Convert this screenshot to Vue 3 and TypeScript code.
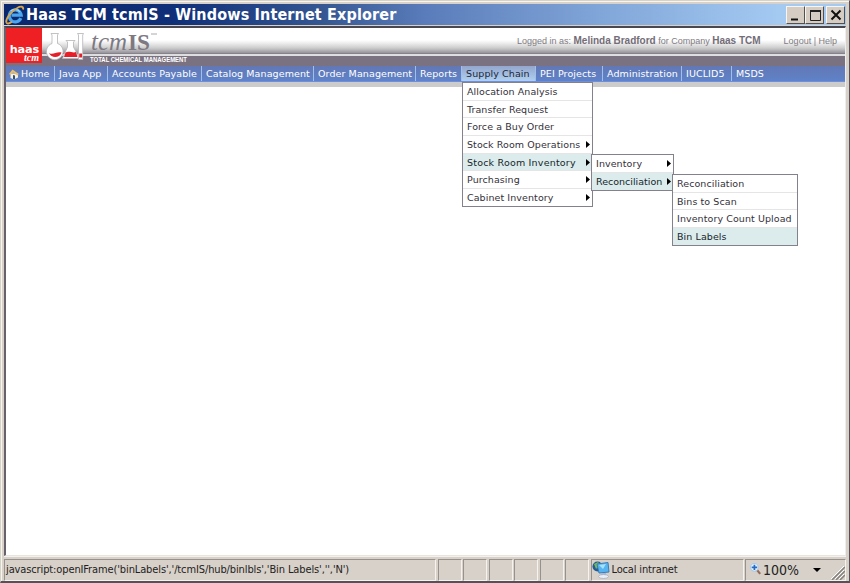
<script setup lang="ts">
interface MenuEntry {
  label: string
  children?: boolean
  active?: boolean
}

const navItems = ['Home', 'Java App', 'Accounts Payable', 'Catalog Management', 'Order Management', 'Reports', 'Supply Chain', 'PEI Projects', 'Administration', 'IUCLID5', 'MSDS']
const activeNav = 'Supply Chain'

const supplyMenu: MenuEntry[] = [
  { label: 'Allocation Analysis' },
  { label: 'Transfer Request' },
  { label: 'Force a Buy Order' },
  { label: 'Stock Room Operations', children: true },
  { label: 'Stock Room Inventory', children: true, active: true },
  { label: 'Purchasing', children: true },
  { label: 'Cabinet Inventory', children: true },
]
const inventoryMenu: MenuEntry[] = [
  { label: 'Inventory', children: true },
  { label: 'Reconciliation', children: true, active: true },
]
const reconciliationMenu: MenuEntry[] = [
  { label: 'Reconciliation' },
  { label: 'Bins to Scan' },
  { label: 'Inventory Count Upload' },
  { label: 'Bin Labels', active: true },
]
const menus = [
  { name: 'supply', entries: supplyMenu },
  { name: 'inventory', entries: inventoryMenu },
  { name: 'reconciliation', entries: reconciliationMenu },
]
</script>

<template>
  <div class="window">
    <header class="titlebar">
      <svg class="ie" width="20" height="20" viewBox="0 0 20 20">
        <path d="M15.800 13.200A6 6 0 1 1 16.200 10.200H6.500" fill="none" stroke="#49a5ee" stroke-width="3.200" />
        <path d="M5.500 6.200A6.200 6.200 0 0 1 15 7" fill="none" stroke="#9bd5ff" stroke-width="1.200" />
        <path d="M18 4.500C18.800 1.500 16 .700 12.200 3 6 6.500 .800 13.500 1.300 17.200 1.700 19.400 4.500 18.600 7 16.800" fill="none" stroke="#d9a54b" stroke-width="1.900" />
      </svg>
      <h1 class="title">Haas TCM tcmIS - Windows Internet Explorer</h1>
      <div class="controls">
        <button class="ctl" aria-label="Minimize"><svg width="16" height="16" viewBox="0 0 16 16"><path d="M3 12.500H10" stroke="#111" stroke-width="2" /></svg></button>
        <button class="ctl" aria-label="Maximize"><svg width="16" height="16" viewBox="0 0 16 16"><path d="M3.500 4V13.500H13.500V4" fill="none" stroke="#222" /><path d="M3 4H14" stroke="#222" stroke-width="2" /></svg></button>
        <button class="ctl close" aria-label="Close"><svg width="16" height="16" viewBox="0 0 16 16"><path d="M3.500 3.500L12.500 12.500M12.500 3.500L3.500 12.500" stroke="#111" stroke-width="2" /></svg></button>
      </div>
    </header>

    <main class="page">
      <div class="banner">
        <div class="haas"><b>haas</b><i>tcm</i></div>
        <svg class="brand" width="150" height="38" viewBox="42 28 150 38">
          <g fill="#fff" stroke="#b4b4b8" stroke-width=".8">
            <path d="M51 33.500H58.500L57.500 35V43.500A8.300 8.300 0 1 1 52 43.500V35Z" />
            <path d="M66 40.500H75L73.500 42V47L79.500 58.500H62.500L67.500 47V42Z" />
            <path d="M77.500 33.500H83.500L82.700 35V59.500H78.500V35Z" />
          </g>
          <path d="M49 53C53 55.500 56 51.500 61.500 52.500 60 58 51.500 59 49 53Z" fill="#e51e29" />
          <path d="M65.500 52.500C69 50.500 73 53.500 76 52L77.500 57H64Z" fill="#e51e29" />
          <path d="M79.200 53.500H82V57.500H79.200Z" fill="#e51e29" />
          <text class="tcm" x="91" y="50" textLength="36" lengthAdjust="spacingAndGlyphs">tcm</text>
          <text class="is" x="128" y="50" textLength="22" lengthAdjust="spacingAndGlyphs">IS</text>
          <path d="M151 34H157" stroke="#aaa" />
          <text class="tag" x="90" y="61.800" textLength="97" lengthAdjust="spacingAndGlyphs">TOTAL CHEMICAL MANAGEMENT</text>
        </svg>
        <p class="session"><span class="who">Logged in as: <b>Melinda Bradford</b> for Company <b>Haas TCM</b></span><span class="links">Logout | Help</span></p>
      </div>

      <nav class="nav">
        <a v-for="item in navItems" :key="item" class="nav-item" :class="{ active: item === activeNav }">
          <svg v-if="item === 'Home'" class="home" width="12" height="12" viewBox="0 0 12 12">
            <path d="M2.500 5.500V10L6 11.500 10 9.500V5.500Z" fill="#f3f1e5" />
            <path d="M1 6L4.500 1.500 10.800 6 9.500 7.500 5 4.500 2.500 7Z" fill="#e8bd6b" />
            <path d="M5 7V11L7 11.500V7.500Z" fill="#34506f" />
          </svg>{{ item }}
        </a>
      </nav>
      <div class="strip"></div>
      <div class="content"></div>
    </main>

    <ul v-for="menu in menus" :key="menu.name" class="menu" :class="menu.name">
      <li v-for="entry in menu.entries" :key="entry.label" class="entry" :class="{ active: entry.active }">
        <span>{{ entry.label }}</span>
        <svg v-if="entry.children" width="4" height="7" viewBox="0 0 4 7"><path d="M0 0L4 3.500 0 7Z" fill="#000" /></svg>
      </li>
    </ul>

    <footer class="status">
      <div class="pane"><span class="url">javascript:openIFrame('binLabels','/tcmIS/hub/binlbls','Bin Labels','','N')</span></div>
      <div v-for="n in 6" :key="n" class="pane"></div>
      <div class="pane zone">
        <svg width="18" height="18" viewBox="0 0 18 18">
          <circle cx="5.500" cy="5.500" r="5" fill="#245a96" /><path d="M2 3L6 1 8 4 4 8Z" fill="#75b957" />
          <path d="M5 3L16 1.500 17 11 7 12Z" fill="#58b4ef" stroke="#397cba" /><path d="M7 4L14 3 11 8Z" fill="#a6e0ff" />
          <path d="M9 12H14V15H9Z" fill="#adb8cf" /><ellipse cx="11.500" cy="15.500" rx="5" ry="2" fill="#e9edf5" stroke="#9ba7bd" stroke-width=".7" />
        </svg><span>Local intranet</span>
      </div>
      <div class="pane zoom">
        <svg class="lens" width="11" height="12" viewBox="0 0 10 11"><path d="M6 6L9.300 10" stroke="#98695d" stroke-width="2" /><circle cx="4" cy="4" r="3.500" fill="#e8f6ff" stroke="#a9c8e6" /><path d="M4 1.500V6.500M1.500 4H6.500" stroke="#296bc0" stroke-width="1.600" /></svg>
        <span>100%</span>
        <svg class="drop" width="8" height="4" viewBox="0 0 8 4"><path d="M0 0H8L4 4Z" /></svg>
        <svg class="grip" width="14" height="14" viewBox="0 0 14 14"><path d="M1 14L14 1M5 14L14 5M9 14L14 9" stroke="#85817d" stroke-width="1.500" /><path d="M0 13L13 0M4 13L13 4M8 13L13 8" stroke="#fff" /></svg>
      </div>
    </footer>
  </div>
</template>

<style>
body { margin: 0; overflow: hidden; }
</style>

<style scoped>
* { box-sizing: border-box; }
.window { position: relative; display: flex; flex-direction: column; width: 850px; height: 583px; padding: 3px 3px 1px; background: #d8d1c9; border: solid; border-width: 1px 1px 2px 1px; border-color: #d5d2ca #555158 #555158 #d5d2ca; box-shadow: inset 1px 1px #f8f5ef; font-family: "DejaVu Sans", sans-serif; }
.titlebar { display: flex; align-items: center; height: 21px; padding: 0 1px 0 1px; background: linear-gradient(90deg, #0b286d 0, #0f2f78 20%, #355792 38%, #5a7cba 50%, #7fa4d7 70%, #a4caf2 92%); }
.ie { flex: none; }
.title { flex: 1; margin: 1px 0 0 1px; color: #fff; font: bold 16px/20px "DejaVu Sans Condensed", "DejaVu Sans", sans-serif; font-stretch: condensed; letter-spacing: .14px; white-space: nowrap; }
.controls { display: flex; }
.ctl { width: 19px; height: 18px; padding: 0; background: #d5cdc4; border: 1px solid; border-color: #f7f5f0 #55504d #55504d #f7f5f0; line-height: 0; }
.close { margin-left: 2px; }
.page { flex: 1; margin: 1px 0 0; border: solid; border-width: 2px 1px 1px 2px; border-color: #4b474e #eee #e8e5df #66616b; background: #fff; min-height: 0; }
.banner { display: flex; height: 38px; background: linear-gradient(#fff 0 12px, #eee 15px, #ccc 20px, #96939a 25px, #77727c 26px, #dedee0 26px 28px, #7b7281 28px); }
.haas { display: flex; flex-direction: column; width: 36px; height: 35px; padding-top: 15px; background: #ee2024; color: #fff; text-align: right; }
.haas b { padding-right: 3px; font: bold 11.3px/13px "DejaVu Sans", sans-serif; letter-spacing: -.2px; }
.haas i { height: 6px; padding-right: 3px; font: italic bold 10px/4px "Liberation Serif", serif; }
.brand { flex: none; overflow: visible; }
.tcm { font: italic 25px "Liberation Serif", serif; fill: #7d7983; }
.is { font: bold 24px "Liberation Serif", serif; fill: #7d7983; }
.tag { font: bold 6.4px "Liberation Sans", sans-serif; fill: #fff; }
.session { flex: 1; display: flex; justify-content: flex-end; gap: 23px; margin: 0; padding: 6px 8px 0 0; color: #817c83; font: 9px/14px "Liberation Sans", sans-serif; white-space: nowrap; }
.session b { font-size: 10px; color: #736d77; }
.nav { display: grid; grid-template-columns: 49px 53px 94px 112px 102px 46px 74px 67px 79px 50px 1fr; height: 16px; background: linear-gradient(#6278b5, #5f82c8); border-bottom: 1px solid #6e8fe0; color: #fff; font-size: 9.5px; letter-spacing: .1px; line-height: 15px; }
.nav-item { display: flex; align-items: center; padding-left: 4px; white-space: nowrap; border-right: 1px solid #a1c0e9; height: 15px; }
.nav-item:last-child { border: 0; }
.nav-item.active { background: linear-gradient(#94a6cd, #b0d0ef); color: #202638; }
.home { flex: none; margin: 0 1px 0 -2px; }
.strip { height: 5px; background: #ccc; }
.menu { position: absolute; margin: 0; padding: 0; list-style: none; background: #fff; border: 1px solid #85818c; color: #343039; font-size: 9.5px; letter-spacing: .08px; }
.supply { left: 461px; top: 81px; width: 131px; }
.inventory { left: 590px; top: 153px; width: 83px; }
.reconciliation { left: 671px; top: 173px; width: 126px; }
.entry { display: flex; align-items: center; justify-content: space-between; height: 17.700px; padding: 0 2px 0 4px; border-bottom: 1px solid #e5e5e5; white-space: nowrap; }
.entry:last-child { height: 17px; border-bottom: 0; }
.entry.active { background: #dcecec; color: #17252a; }
.supply .active { letter-spacing: .2px; }
.inventory .active { letter-spacing: 0; }
.status { display: grid; grid-template-columns: 432px 24px 24px 24px 24px 24px 24px 153px 1fr; gap: 1.500px; height: 24px; padding: 2px 0 0; font: 11px/20px "DejaVu Sans Condensed", "DejaVu Sans", sans-serif; color: #222; border-top: 1px solid #f4f1ec; }
.pane { display: flex; align-items: center; min-width: 0; border: 1px solid; border-color: #96918d #f6f3ef #f6f3ef #96918d; white-space: nowrap; }
.url { padding-left: 1px; letter-spacing: -.12px; }
.zone { gap: 2px; padding-left: 0; letter-spacing: -.15px; }
.zoom { padding-left: 4px; font-size: 14px; }
.lens { margin-top: -3px; }
.zoom span { margin-left: 2px; }
.drop { margin-left: 14px; }
.grip { margin: 5px 0 0 auto; }
</style>
